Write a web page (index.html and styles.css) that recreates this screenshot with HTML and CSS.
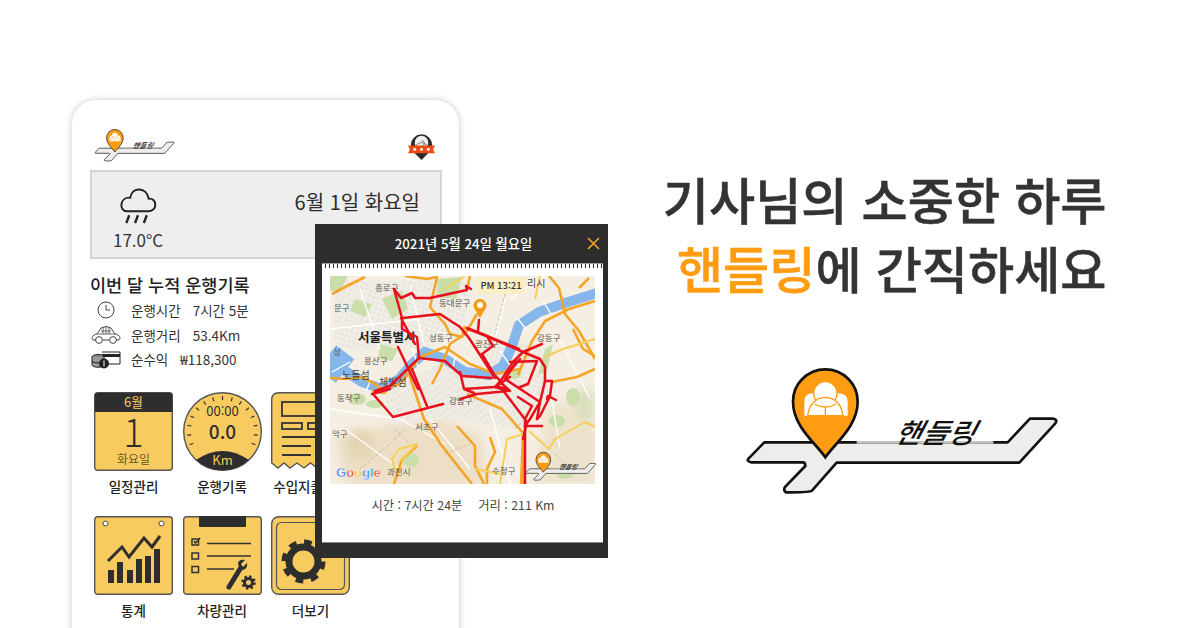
FILE: index.html
```html
<!DOCTYPE html>
<html lang="ko">
<head>
<meta charset="utf-8">
<title>핸들링</title>
<link rel="stylesheet" href="styles.css">
</head>
<body>
<svg class="defs" width="0" height="0" aria-hidden="true">
  <symbol id="logo" viewBox="0 0 990 420">
    <path d="M85 247H815L882 176H950Q966 178 958 190L850 308H302L228 392Q222 398 150 397Q140 390 148 380L208 318Q208 307 200 307H45Q30 303 38 295Z" fill="#efedeb" stroke="#111" stroke-width="8" stroke-linejoin="round"/>
    <path d="M362 247H772" stroke="#c4c4c4" stroke-width="8"/>
    <text class="logo-word" transform="translate(472 248) skewX(-28) scale(1.060 1)">핸들링</text>
    <path d="M268 292C240 250 171 200 171 125A97 97 0 1 1 365 125C365 200 296 250 268 292Z" fill="#ff9c11" stroke="#111" stroke-width="8"/>
    <path d="M205 167V125Q205 100 232 100H304Q335 100 335 125V167Z" fill="#fff"/>
    <circle cx="268" cy="100" r="35" fill="#fff" stroke="#ff9c11" stroke-width="4"/>
    <path d="M215 167Q222 115 268 112Q314 115 321 167Z" fill="#fff" stroke="#ff9c11" stroke-width="4"/>
    <path d="M235 132Q268 150 301 132M268 142V167" fill="none" stroke="#ff9c11" stroke-width="4"/>
  </symbol>
</svg>

<main class="stage">
  <section class="phone">
    <header class="phone-head">
      <svg class="logo-small"><use href="#logo"/></svg>
      <svg class="badge" viewBox="0 0 30 30">
        <path d="M15 29L7 21A11 11 0 1 1 23 21Z" fill="#2b2b2b"/>
        <circle cx="15" cy="11" r="7" fill="#eee"/>
        <path d="M15 9A3 3 0 0 1 15 15M9 14Q15 8 21 14" fill="none" stroke="#777" stroke-width="1"/>
        <path d="M1 14H29L27 18L29 22H1L3 18Z" fill="#ee4a16"/>
        <circle cx="8" cy="18" r="1.500" fill="#fff"/><circle cx="15" cy="18" r="1.500" fill="#fff"/><circle cx="22" cy="18" r="1.500" fill="#fff"/>
      </svg>
    </header>

    <div class="weather">
      <div class="weather-left">
        <svg class="cloud" viewBox="0 0 40 38">
          <path d="M9 25H31C40 25 40 11 31 12C29 0 14 -1 12 11C1 10 0 25 9 25Z" fill="none" stroke="#222" stroke-width="2"/>
          <path d="M8 37L11 29M17 37L20 29M26 37L29 29" stroke="#222" stroke-width="2.400"/>
        </svg>
        <span class="temp">17.0°C</span>
      </div>
      <span class="date">6월 1일 화요일</span>
    </div>

    <h2 class="record-title">이번 달 누적 운행기록</h2>
    <ul class="records">
      <li class="record">
        <svg class="record-icon" viewBox="0 0 32 20"><circle cx="16" cy="10" r="8" fill="none" stroke="#444"/><path d="M16 5V10H20" fill="none" stroke="#444"/></svg>
        <span>운행시간</span><span>7시간 5분</span>
      </li>
      <li class="record">
        <svg class="record-icon" viewBox="0 0 32 20"><path d="M6 15H3C1 13 2 10 7 9L11 3Q16 0 21 3L25 9C30 10 31 13 29 15H26M19 15H13" fill="none" stroke="#444"/><circle cx="9" cy="15" r="3.400" fill="none" stroke="#444"/><circle cx="23" cy="15" r="3.400" fill="none" stroke="#444"/><path d="M7 9H25M11 6H21M13 2.500V9M16 2V9M19 2.500V9" fill="none" stroke="#555" stroke-width=".9"/></svg>
        <span>운행거리</span><span>53.4Km</span>
      </li>
      <li class="record">
        <svg class="record-icon" viewBox="0 0 32 20"><path d="M12 3H30V15H16" fill="#fff" stroke="#222"/><rect x="12" y="5" width="18" height="3" fill="#222"/><ellipse cx="8" cy="8" rx="6" ry="2.500" fill="#888" stroke="#222"/><path d="M2 8V16C2 19 14 19 14 16V8M2 12C2 14.500 14 14.500 14 12" fill="#999" stroke="#222"/><circle cx="14" cy="14.500" r="5" fill="#222"/><path d="M14 11.500V17.500" stroke="#fff"/></svg>
        <span>순수익</span><span>₩118,300</span>
      </li>
    </ul>

    <div class="tiles">
      <figure class="tile">
        <svg class="tile-art" viewBox="0 0 79 79">
          <rect x=".7" y=".7" width="77.600" height="77.600" rx="3" fill="#f8cb60" stroke="#555" stroke-width="1.400"/>
          <path d="M.7 20V3.700Q.7 .7 3.700 .7H75.300Q78.300 .7 78.300 3.700V20Z" fill="#2e2e2e"/>
          <text class="t-gold t13" x="39.500" y="15">6월</text>
          <text class="t-dark t-big" x="39.500" y="55">1</text>
          <text class="t-brown t12" x="39.500" y="72">화요일</text>
        </svg>
        <figcaption>일정관리</figcaption>
      </figure>
      <figure class="tile">
        <svg class="tile-art" viewBox="0 0 79 79">
          <circle cx="39.500" cy="39.500" r="38.800" fill="#f8cb60" stroke="#555" stroke-width="1.400"/>
          <g stroke="#333" stroke-width="1.200">
            <path d="M39.500 4V8" transform="rotate(-112 39.500 39.500)"/>
            <path d="M39.500 4V8" transform="rotate(-96 39.500 39.500)"/><path d="M39.500 4V8" transform="rotate(-80 39.500 39.500)"/>
            <path d="M39.500 4V8" transform="rotate(-64 39.500 39.500)"/><path d="M39.500 4V8" transform="rotate(-48 39.500 39.500)"/>
            <path d="M39.500 4V8" transform="rotate(-32 39.500 39.500)"/><path d="M39.500 4V8" transform="rotate(-16 39.500 39.500)"/>
            <path d="M39.500 4V8"/><path d="M39.500 4V8" transform="rotate(16 39.500 39.500)"/>
            <path d="M39.500 4V8" transform="rotate(32 39.500 39.500)"/><path d="M39.500 4V8" transform="rotate(48 39.500 39.500)"/>
            <path d="M39.500 4V8" transform="rotate(64 39.500 39.500)"/><path d="M39.500 4V8" transform="rotate(80 39.500 39.500)"/>
            <path d="M39.500 4V8" transform="rotate(96 39.500 39.500)"/><path d="M39.500 4V8" transform="rotate(112 39.500 39.500)"/>
          </g>
          <path d="M13 68Q39.500 50 66 68A39 39 0 0 1 13 68Z" fill="#2e2e2e"/>
          <text class="t-dark t13" x="39.500" y="24">00:00</text>
          <text class="t-dark t19" x="39.500" y="47">0.0</text>
          <text class="t-gold t13" x="39.500" y="73">Km</text>
        </svg>
        <figcaption>운행기록</figcaption>
      </figure>
      <figure class="tile">
        <svg class="tile-art" viewBox="0 0 79 79">
          <path d="M.7 71V8Q.7 .7 8 .7H78.300V71L72 76L66 71L60 76L53 71L46 76L39.500 71L33 76L26 71L19 76L13 71L7 76Z" fill="#f8cb60" stroke="#555" stroke-width="1.400"/>
          <g fill="none" stroke="#333" stroke-width="1.800">
            <rect x="11" y="10" width="57" height="14"/><rect x="11" y="31" width="20" height="6"/><rect x="37" y="31" width="31" height="6"/>
            <path d="M11 45H68M11 54H40M11 63H40M48 54H68M48 63H68"/>
          </g>
        </svg>
        <figcaption>수입지출관리</figcaption>
      </figure>
      <figure class="tile">
        <svg class="tile-art" viewBox="0 0 79 79">
          <rect x=".7" y=".7" width="77.600" height="77.600" rx="3" fill="#f8cb60" stroke="#555" stroke-width="1.400"/>
          <circle cx="11.500" cy="7.500" r="2.500" fill="#fff" stroke="#444"/><circle cx="67.500" cy="7.500" r="2.500" fill="#fff" stroke="#444"/>
          <path d="M14 54H20V67H14ZM23 46H29V67H23ZM33 54H39V67H33ZM42 43H48V67H42ZM51 40H57V67H51ZM60 33H66V67H60Z" fill="#2e2e2e"/>
          <path d="M14 45L28 31L35 41L50 22L58 31L66 20" fill="none" stroke="#2e2e2e" stroke-width="3"/>
        </svg>
        <figcaption>통계</figcaption>
      </figure>
      <figure class="tile">
        <svg class="tile-art" viewBox="0 0 79 79">
          <rect x=".7" y=".7" width="77.600" height="77.600" rx="3" fill="#f8cb60" stroke="#555" stroke-width="1.400"/>
          <rect x="16" y="0" width="47" height="11" rx="1" fill="#2e2e2e"/>
          <g fill="none" stroke="#333" stroke-width="1.500">
            <rect x="9" y="23" width="6.500" height="6"/><rect x="9" y="37" width="6.500" height="6"/><rect x="9" y="50.500" width="6.500" height="6"/>
            <path d="M11 25L12.500 27L17 22M24 27.500H68M24 40H68M24 53H51"/>
          </g>
          <path d="M46 71L57 53" stroke="#2e2e2e" stroke-width="5" stroke-linecap="round"/>
          <path d="M55 48C55 44 59 43 62 44L58 48L60 51L64 47C65 51 62 55 57 54Z" fill="#2e2e2e"/>
          <circle cx="65.500" cy="66.500" r="4" fill="none" stroke="#2e2e2e" stroke-width="3"/>
          <circle cx="65.500" cy="66.500" r="6" fill="none" stroke="#2e2e2e" stroke-width="2.500" stroke-dasharray="2.350 2.350"/>
        </svg>
        <figcaption>차량관리</figcaption>
      </figure>
      <figure class="tile">
        <svg class="tile-art" viewBox="0 0 79 79">
          <rect x=".7" y=".7" width="77.600" height="77.600" rx="7" fill="#f8cb60" stroke="#555" stroke-width="1.400"/>
          <rect x="5.500" y="6.500" width="68" height="67" rx="5" fill="none" stroke="#555" stroke-width="1.200"/>
          <circle cx="32.500" cy="45.500" r="14.500" fill="none" stroke="#2e2e2e" stroke-width="7"/>
          <circle cx="32.500" cy="45.500" r="19" fill="none" stroke="#2e2e2e" stroke-width="6" stroke-dasharray="7.500 7.420"/>
        </svg>
        <figcaption>더보기</figcaption>
      </figure>
    </div>

    <aside class="popup">
      <div class="popup-head">
        <span class="popup-title">2021년 5월 24일 월요일</span>
        <svg class="popup-close" viewBox="0 0 13 13"><path d="M1 1L12 12M12 1L1 12" stroke="#f5a623" stroke-width="1.600"/></svg>
      </div>
      <div class="popup-rule"></div>
      <div class="popup-panel">
        <div class="map">
          <svg class="map-art" viewBox="330 277 265 208">
            <defs>
              <pattern id="city" width="5" height="5" patternUnits="userSpaceOnUse" patternTransform="rotate(18)"><path d="M0 0H5M0 0V5" stroke="#fff" stroke-width=".8"/></pattern>
              <pattern id="city2" width="4" height="6" patternUnits="userSpaceOnUse" patternTransform="rotate(-30)"><path d="M0 0H4M0 0V6" stroke="#fff" stroke-width=".8"/></pattern>
              <filter id="haze" x="-20%" y="-20%" width="140%" height="140%"><feGaussianBlur stdDeviation="5"/></filter>
            </defs>
            <rect x="330" y="277" width="265" height="208" fill="#f5eee2"/>
            <g filter="url(#haze)">
              <path d="M440 420L480 435L490 485H345L335 440L390 425Z" fill="#ecdfc6"/>
              <path d="M545 410L595 395V485H535Z" fill="#ede3cc"/>
              <ellipse cx="360" cy="445" rx="14" ry="16" fill="#e3d4b4"/>
              <ellipse cx="585" cy="405" rx="10" ry="16" fill="#d8dfbc"/>
            </g>
            <g class="soft">
              <path d="M335 282H470L465 330L420 350L335 350Z" fill="#ebe7de"/>
              <path d="M335 282H470L465 330L420 350L335 350Z" fill="url(#city)"/>
              <path d="M385 395L440 365L540 400L520 430L440 420L390 425Z" fill="#ebe6dc"/>
              <path d="M385 395L440 365L540 400L520 430L440 420L390 425Z" fill="url(#city2)"/>
              <path d="M480 345L540 345L550 400L500 385Z" fill="#ebe6dc"/>
              <path d="M480 345L540 345L550 400L500 385Z" fill="url(#city)"/>
              <g fill="#c9dea8">
                <path d="M330 277H348L340 292L330 292Z"/>
                <path d="M382 300L402 291L408 310L392 320Z"/>
                <path d="M438 280L462 278L456 300L436 298Z"/>
                <path d="M355 300L372 305L365 318L350 312Z"/>
                <path d="M380 345L398 350L392 362L378 360Z"/>
                <ellipse cx="357" cy="400" rx="9" ry="6"/>
                <ellipse cx="411" cy="461" rx="8" ry="7"/>
                <ellipse cx="375" cy="405" rx="9" ry="4"/>
                <ellipse cx="573" cy="398" rx="7" ry="9"/>
                <ellipse cx="557" cy="422" rx="8" ry="6"/>
                <ellipse cx="515" cy="375" rx="6" ry="5"/>
                <ellipse cx="565" cy="474" rx="9" ry="6"/>
                <path d="M545 350L553 345L547 372L538 376Z"/>
              </g>
              <g fill="none" stroke="#fff" stroke-width="1.300">
                <path d="M330 330L420 320M360 290L380 350M410 285L425 350M330 410L400 420M400 420L445 445M345 430L400 470M430 420L470 470M490 410L510 485M560 340L590 400M550 390L560 450M510 300L545 277M505 300L495 340"/>
              </g>
              <g fill="none" stroke="#b8b3a6" stroke-width=".8" stroke-dasharray="3 2">
                <path d="M360 470L390 445L405 430M395 430L410 445M445 455L470 445M555 455L575 475M505 295L495 335M515 430L525 420"/>
              </g>
              <path d="M327 360L345 372L362 383L382 390L399 380L412 365L425 353L445 360L465 373L489 376L503 367L512 347L519 326L539 313L565 304L597 294" fill="none" stroke="#86b7ec" stroke-width="10"/>
              <path d="M327 358L345 372" fill="none" stroke="#86b7ec" stroke-width="30"/>
              <g fill="none" stroke="#fff" stroke-width="1.400">
                <path d="M332 373L350 363M366 392L372 378M418 368L412 348M452 372L456 355M510 366L500 352M526 330L518 320M551 315L543 302"/>
              </g>
              <g class="rd">
                <path d="M332 295L347 287L365 278"/>
                <path d="M405 277L427 280L437 278L430 308L445 325L450 335L462 338L465 327"/>
                <path d="M470 277L467 290M477 315L465 335L450 345L440 370L432 385"/>
                <path d="M330 379L345 380L362 378L375 385L385 394L372 392M375 392L400 385L420 358L445 348L470 365L495 375L520 370"/>
                <path d="M549 277L559 289L565 315L579 332L595 360"/>
                <path d="M579 289L589 279M595 302L569 310L545 322L532 342L518 376"/>
                <path d="M552 383L577 378L595 370M573 330L583 350L595 357"/>
                <path d="M414 390L424 420L442 447L472 485M409 375L414 390"/>
                <path d="M457 427L475 447L475 467L484 485M490 438L495 453L487 470L487 485"/>
                <path d="M467 395L502 410L524 435"/>
                <path d="M417 447L402 460L394 485"/>
                <path d="M524 435L522 485" stroke-width="4.500"/>
              </g>
              <g class="yw">
                <path d="M524 435L507 440L500 485M529 432L549 450L555 440L585 423L595 428"/>
                <path d="M395 470L392 460L399 450L417 445L400 462"/>
                <path d="M545 358L563 350L595 340M540 277L535 300M465 277L445 290M475 470L500 475"/>
              </g>
            </g>
            <g class="labels">
              <text x="375" y="292">종로구</text><text x="439" y="307">동대문구</text><text x="334" y="312">문구</text>
              <text x="429" y="342">성동구</text><text x="537" y="342">강동구</text><text x="364" y="365">용산구</text>
              <text x="333" y="356">성</text><text x="475" y="348">광진구</text><text x="337" y="402">동작구</text>
              <text x="449" y="405">강남구</text><text x="415" y="431">서초구</text><text x="332" y="438">악구</text>
              <text x="387" y="476">과천시</text><text x="492" y="475">수정구</text>
              <text class="lab-md" x="342" y="380">노들섬</text><text class="lab-md" x="379" y="387">체빛섬</text>
              <text class="lab-md" x="527" y="288">리시</text>
              <text class="lab-lg" x="358" y="343">서울특별시</text>
            </g>
            <g class="route">
              <path d="M394 290L401 299L412 294L415 299L430 299L467 291L466 287L471 290"/>
              <path d="M394 290L402 319L402 330L417 338L419 359M415 345L401 319M398 348L418 390"/>
              <path d="M403 319L440 315L460 328L469 339L495 379"/>
              <path d="M467 329L519 350M479 321L478 332"/>
              <path d="M419 359L445 362L462 377L492 379"/>
              <path d="M419 359L390 387L375 392M373 395L393 418L443 405M412 370L427 407M372 395L390 390"/>
              <path d="M468 330L487 337L493 347L482 355L495 377L502 383"/>
              <path d="M475 332L523 353L542 345"/>
              <path d="M523 353L513 363L502 380L495 388L502 390L527 423L523 440"/>
              <path d="M523 353L540 360L545 368L545 382L540 403L537 420"/>
              <path d="M510 363L537 362L528 385L520 388"/>
              <path d="M505 380L515 365L510 372L520 360M505 380L540 403L530 420L525 427"/>
              <path d="M545 382L552 382L550 397L540 417L537 420M547 400L548 397L556 401"/>
              <path d="M525 427L542 427M518 398L532 407L525 420"/>
              <path d="M460 373L464 390L495 388M460 400L477 395L508 392M464 390L474 394M495 388L510 378"/>
              <path d="M525 423V486"/>
              <path d="M500 383L510 392L497 387"/>
            </g>
            <rect class="tip" x="477" y="278" width="48" height="17" rx="2"/>
            <text class="tip-text" x="501" y="290">PM 13:21</text>
            <path d="M480 319L474 309A6.500 6.500 0 1 1 486 309Z" fill="#f39a16"/>
            <circle cx="480" cy="306" r="3" fill="#fff"/>
            <text class="g-logo" x="336" y="478"><tspan fill="#4285f4">G</tspan><tspan fill="#ea4335">o</tspan><tspan fill="#fbbc05">o</tspan><tspan fill="#4285f4">g</tspan><tspan fill="#34a853">l</tspan><tspan fill="#ea4335">e</tspan></text>
          </svg>
          <svg class="logo-map"><use href="#logo"/></svg>
        </div>
        <p class="popup-foot"><span>시간 : 7시간 24분</span><span>거리 : 211 Km</span></p>
      </div>
    </aside>
  </section>

  <section class="promo">
    <h1 class="headline">기사님의 소중한 하루<br><em class="brand">핸들링</em>에 간직하세요</h1>
    <svg class="logo-large"><use href="#logo"/></svg>
  </section>
</main>
</body>
</html>
```

FILE: styles.css
```css
* { box-sizing: border-box; }
html, body { margin: 0; padding: 0; }
body {
  width: 1200px;
  height: 628px;
  overflow: hidden;
  background: #fff;
  color: #222;
  font-family: "Noto Sans CJK KR", "Noto Sans", sans-serif;
}
.defs { position: absolute; }
.logo-word { font-size: 82px; font-weight: 500; fill: #111; }

.stage {
  display: flex;
  justify-content: space-between;
  align-items: flex-start;
  height: 628px;
  overflow: hidden;
  padding: 100px 93.500px 0 72px;
}

/* phone */
.phone {
  position: relative;
  flex: none;
  width: 387px;
  height: 560px;
  padding: 27px 17px 0 18px;
  background: #fff;
  border-radius: 24px;
  box-shadow: 0 0 7px rgba(0, 0, 0, .22);
}
.phone-head {
  display: flex;
  justify-content: space-between;
  align-items: flex-start;
  height: 36px;
  padding: 4px 6px 0 2px;
  margin-bottom: 7px;
}
.logo-small { width: 84.500px; height: 36px; margin-top: -4px; }
.badge { width: 29px; height: 29px; margin-top: 1px; }

.weather {
  display: flex;
  justify-content: space-between;
  align-items: flex-start;
  height: 89px;
  padding: 15px 20px 0 21px;
  background: #eee;
  border: 2px solid #d4d4d4;
}
.weather-left { display: flex; flex-direction: column; align-items: center; }
.cloud { width: 40px; height: 37px; }
.temp { font-size: 17px; line-height: 24px; margin-top: 4px; color: #333; }
.date { font-size: 20px; line-height: 30px; color: #2c2c2c; }

.record-title { margin: 13px 0 0; font-size: 17.500px; line-height: 26px; font-weight: 500; color: #222; }
.records { list-style: none; margin: 0; padding: 0; }
.record {
  display: flex;
  align-items: center;
  gap: 12px;
  height: 24.500px;
  font-size: 13.500px;
  color: #333;
}
.record-icon { width: 32px; height: 20px; margin-right: -3px; flex: none; }

.tiles {
  display: grid;
  grid-template-columns: repeat(3, 79px);
  column-gap: 9.500px;
  row-gap: 15px;
  margin-top: 20px;
  padding-left: 4px;
}
.tile { margin: 0; display: flex; flex-direction: column; align-items: center; }
.tile-art { width: 79px; height: 79px; display: block; }
.tile figcaption { font-size: 13.500px; line-height: 30px; font-weight: 500; color: #222; white-space: nowrap; }
.tile text { text-anchor: middle; font-family: "Noto Sans CJK KR", sans-serif; }
.t-gold { fill: #f8cb60; }
.t-dark { fill: #2e2e2e; }
.t-brown { fill: #6a5526; }
.t12 { font-size: 12px; }
.t13 { font-size: 13px; }
.t19 { font-size: 19px; font-weight: 500; }
.t-big { font-size: 38px; font-weight: 300; }

/* popup */
.popup {
  position: absolute;
  left: 243px;
  top: 124px;
  width: 293px;
  height: 334px;
  padding: 0 5px 15px 7px;
  background: #2d2d2d;
  display: flex;
  flex-direction: column;
}
.popup-head {
  display: flex;
  justify-content: center;
  align-items: center;
  position: relative;
  height: 39px;
  flex: none;
}
.popup-title { font-size: 13.300px; font-weight: 500; color: #fff; margin-left: 2px; white-space: nowrap; }
.popup-close { position: absolute; right: 3px; top: 13px; width: 13px; height: 13px; }
.popup-rule {
  height: 5px;
  flex: none;
  border-top: 1px solid #999;
  background: repeating-linear-gradient(90deg, #fff 0 3px, #2d2d2d 3px 4px);
}
.popup-panel { flex: 1; background: #fff; padding: 8px 7px 0 8px; border-bottom: 1px solid #888; }
.map { position: relative; height: 208px; }
.map-art { display: block; width: 265px; height: 208px; }
.logo-map { position: absolute; left: 192.500px; top: 174px; width: 75px; height: 32px; }
.popup-foot {
  margin: 10px 0 0;
  display: flex;
  justify-content: center;
  gap: 16px;
  font-size: 12.300px;
  line-height: 22px;
  color: #444;
}
.soft { filter: blur(.35px); }
.rd { fill: none; stroke: #f5a428; stroke-width: 2.600; stroke-linejoin: round; }
.yw { fill: none; stroke: #f8cf56; stroke-width: 2; stroke-linejoin: round; }
.route { fill: none; stroke: #e8101c; stroke-width: 2.500; stroke-linejoin: round; stroke-linecap: round; }
.labels text { font-size: 8.500px; fill: #5d564a; font-family: "Noto Sans CJK KR", sans-serif; }
.labels .lab-md { font-size: 10px; fill: #444; }
.labels .lab-lg { font-size: 12.500px; font-weight: 700; fill: #222; }
.tip { fill: #fbeec2; opacity: .92; }
.tip-text { font-size: 9.500px; font-weight: 500; text-anchor: middle; fill: #333; font-family: "Noto Sans CJK KR", sans-serif; }
.g-logo { font-family: "Liberation Sans", sans-serif; font-size: 13px; font-weight: 700; stroke: #fff; stroke-width: .4px; }

/* promo */
.promo { display: flex; flex-direction: column; align-items: flex-end; padding-top: 64px; }
.headline {
  margin: 0;
  text-align: right;
  font-size: 50.200px;
  line-height: 68.500px;
  font-weight: 500;
  -webkit-text-stroke: .5px;
  color: #333;
  white-space: nowrap;
}
.brand { font-style: normal; color: #ff9c11; }
.logo-large { width: 330px; height: 140px; margin: 59px 41px 0 0; }
```
